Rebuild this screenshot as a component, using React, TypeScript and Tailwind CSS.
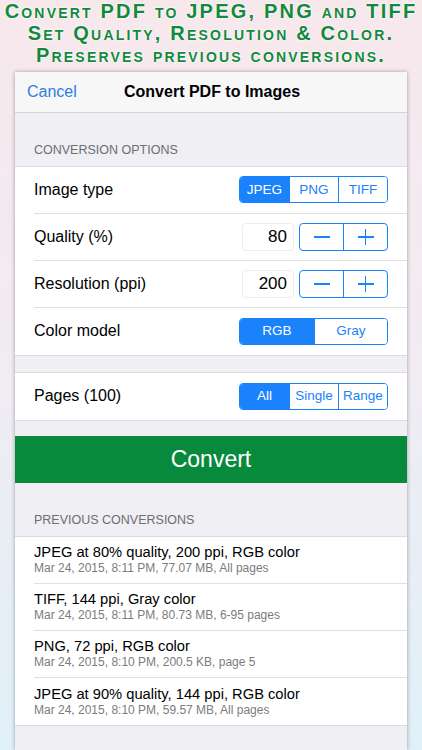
import React from 'react';

const font = { fontFamily: '"Liberation Sans", Arial, sans-serif' };

function Segmented({ items, active, widths }: { items: string[]; active: number; widths: string[] }) {
  return (
    <div className="flex h-[27px] rounded-[4px] border border-[#1a82fb] overflow-hidden">
      {items.map((it, i) => (
        <div
          key={it}
          className={`${widths[i]} flex items-center justify-center text-[13.5px] ${
            i === active ? 'bg-[#1a82fb] text-white' : 'bg-white text-[#1a82fb]'
          } ${i > 0 ? 'border-l border-[#1a82fb]' : ''}`}
        >
          {it}
        </div>
      ))}
    </div>
  );
}

function Stepper({ value }: { value: string }) {
  return (
    <div className="flex items-center gap-[5px]">
      <div className="w-[52px] h-[28px] rounded-[4px] border border-[#ececec] bg-white flex items-center justify-end pr-[6px] text-[17px] text-black">
        {value}
      </div>
      <div className="flex h-[28px] w-[89px] rounded-[4px] border border-[#1a82fb] overflow-hidden">
        <div className="flex-1 flex items-center justify-center">
          <div className="w-[16px] h-[1.5px] bg-[#1a82fb]" />
        </div>
        <div className="flex-1 flex items-center justify-center border-l border-[#1a82fb] relative">
          <div className="w-[16px] h-[1.5px] bg-[#1a82fb]" />
          <div className="absolute w-[1.5px] h-[16px] bg-[#1a82fb]" />
        </div>
      </div>
    </div>
  );
}

function Row({ label, children, last }: { label: string; children: React.ReactNode; last?: boolean }) {
  return (
    <div className="pl-[19px] bg-white">
      <div className={`h-[47px] flex items-center justify-between pr-[19px] ${last ? '' : 'border-b border-[#e0e0e3]'}`}>
        <span className="text-[16px] text-black">{label}</span>
        {children}
      </div>
    </div>
  );
}

const history = [
  ['JPEG at 80% quality, 200 ppi, RGB color', 'Mar 24, 2015, 8:11 PM, 77.07 MB, All pages'],
  ['TIFF, 144 ppi, Gray color', 'Mar 24, 2015, 8:11 PM, 80.73 MB, 6-95 pages'],
  ['PNG, 72 ppi, RGB color', 'Mar 24, 2015, 8:10 PM, 200.5 KB, page 5'],
  ['JPEG at 90% quality, 144 ppi, RGB color', 'Mar 24, 2015, 8:10 PM, 59.57 MB, All pages'],
];

export default function App() {
  return (
    <div
      className="w-[422px] h-[750px] overflow-hidden bg-linear-to-b from-[#f7e8ec] via-[#f0ecf2] to-[#e0f0f9] flex flex-col"
      style={font}
    >
      {/* Promo caption */}
      <div className="h-[72px] text-center text-[#12893d] font-bold text-[20px] leading-[22px] tracking-[2.2px] whitespace-nowrap [font-variant:small-caps] [text-shadow:0_0_2px_#fff,0_0_2px_#fff]">
        <div>Convert PDF to JPEG, PNG and TIFF</div>
        <div>Set Quality, Resolution &amp; Color.</div>
        <div>Preserves previous conversions.</div>
      </div>

      {/* Phone screen */}
      <div className="mx-[15px] flex-1 bg-[#efeff4] shadow-[0_0_4px_rgba(0,0,0,0.35)] flex flex-col">
        {/* Nav bar */}
        <div className="h-[41px] bg-[#f7f7f8] border-b border-[#d4d4d8] flex items-center px-[12px] relative">
          <span className="text-[16px] text-[#2f7de1]">Cancel</span>
          <span className="absolute left-[109px] text-[16px] font-bold text-black">Convert PDF to Images</span>
        </div>

        <div className="h-[28px]" />
        <div className="px-[19px] pb-[6px] text-[12.5px] text-[#6d6d72] uppercase">Conversion options</div>

        <div className="border-y border-[#dcdce0]">
          <Row label="Image type">
            <Segmented items={['JPEG', 'PNG', 'TIFF']} active={0} widths={['w-[49px]', 'w-[49px]', 'w-[49px]']} />
          </Row>
          <Row label="Quality (%)">
            <Stepper value="80" />
          </Row>
          <Row label="Resolution (ppi)">
            <Stepper value="200" />
          </Row>
          <Row label="Color model" last>
            <Segmented items={['RGB', 'Gray']} active={0} widths={['w-[74px]', 'w-[73px]']} />
          </Row>
        </div>

        <div className="h-[16px]" />

        <div className="border-y border-[#dcdce0]">
          <Row label="Pages (100)" last>
            <Segmented items={['All', 'Single', 'Range']} active={0} widths={['w-[49px]', 'w-[49px]', 'w-[49px]']} />
          </Row>
        </div>

        <div className="h-[15px]" />

        <div className="h-[47px] bg-[#078a3c] flex items-center justify-center text-white text-[23px]">
          Convert
        </div>

        <div className="h-[28px]" />
        <div className="px-[19px] pb-[6px] text-[12.5px] text-[#6d6d72] uppercase">Previous conversions</div>

        <div className="bg-white border-y border-[#dcdce0]">
          {history.map(([t, s], i) => (
            <div key={i} className="pl-[19px]">
              <div
                className={`h-[47px] flex flex-col justify-center ${
                  i < history.length - 1 ? 'border-b border-[#e0e0e3]' : ''
                }`}
              >
                <div className="text-[14.7px] leading-[18px] text-black">{t}</div>
                <div className="text-[12px] leading-[15px] text-[#7b7b80]">{s}</div>
              </div>
            </div>
          ))}
        </div>
      </div>
    </div>
  );
}
